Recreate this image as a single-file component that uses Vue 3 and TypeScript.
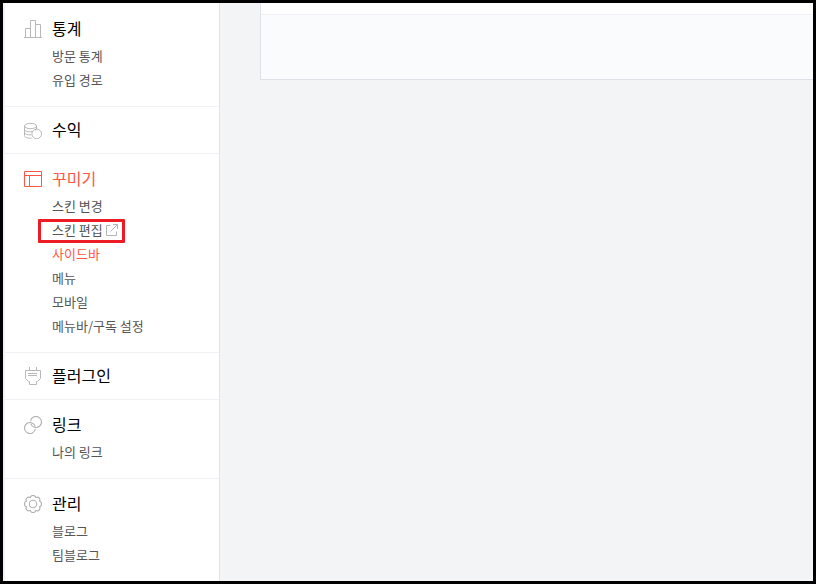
<script setup lang="ts">
type IconName = 'stats' | 'coins' | 'layout' | 'plug' | 'link' | 'gear'

interface MenuItem {
  label: string
  active?: boolean
  external?: boolean
}

interface MenuSection {
  title: string
  icon: IconName
  active?: boolean
  items: MenuItem[]
}

const sections: MenuSection[] = [
  { title: '통계', icon: 'stats', items: [{ label: '방문 통계' }, { label: '유입 경로' }] },
  { title: '수익', icon: 'coins', items: [] },
  {
    title: '꾸미기',
    icon: 'layout',
    active: true,
    items: [
      { label: '스킨 변경' },
      { label: '스킨 편집', external: true },
      { label: '사이드바', active: true },
      { label: '메뉴' },
      { label: '모바일' },
      { label: '메뉴바/구독 설정' },
    ],
  },
  { title: '플러그인', icon: 'plug', items: [] },
  { title: '링크', icon: 'link', items: [{ label: '나의 링크' }] },
  { title: '관리', icon: 'gear', items: [{ label: '블로그' }, { label: '팀블로그' }] },
]
</script>

<template>
  <div class="frame">
    <nav class="sidebar">
      <section
        v-for="section in sections"
        :key="section.title"
        class="section"
        :class="{ single: section.items.length === 0 }"
      >
        <a href="#" class="title" :class="{ active: section.active }">
          <svg class="icon" viewBox="0 0 18 18" aria-hidden="true">
            <template v-if="section.icon === 'stats'">
              <path d="M0 17.5H18M1.5 17V8.5H6.5M6.5 17V.5H11.5V17M11.5 4.5H16.5V17" />
            </template>
            <template v-else-if="section.icon === 'coins'">
              <ellipse cx="6.5" cy="5" rx="6" ry="2.7" />
              <path d="M.5 5V14.6C.5 16.3 3.2 17.4 7.6 17.2M12.5 5V8M.5 8.4C.9 10.2 4.4 11.3 8.2 10.6M.5 11.6C.9 13.2 4 14.2 7.2 13.8M11 9.2C11.8 9 12.4 8.6 12.5 8" />
              <circle cx="12.7" cy="12.9" r="4.8" />
            </template>
            <template v-else-if="section.icon === 'layout'">
              <path d="M.5 1.5H17.5V16.5H.5ZM.5 5.5H17.5M5.5 5.5V16.5" />
            </template>
            <template v-else-if="section.icon === 'plug'">
              <path d="M5.5 0V3.5M12.5 0V3.5M1.5 3.5H16.5V11.5L13.5 14.5H12.5V17.5H5.5V14.5H4.5L1.5 11.5ZM4 6.5H13M4 8.5H13" />
            </template>
            <template v-else-if="section.icon === 'link'">
              <path class="round" d="M11.45 12.77A5.5 5.5 0 1 1 11.23 10.3M6.55 5.23A5.5 5.5 0 1 1 6.77 7.7" />
            </template>
            <template v-else>
              <path class="round" d="M6.28 2.44A2.85 2.85 0 0 1 11.72 2.44A2.85 2.85 0 0 1 15.56 6.28A2.85 2.85 0 0 1 15.56 11.72A2.85 2.85 0 0 1 11.72 15.56A2.85 2.85 0 0 1 6.28 15.56A2.85 2.85 0 0 1 2.44 11.72A2.85 2.85 0 0 1 2.44 6.28A2.85 2.85 0 0 1 6.28 2.44Z" />
              <circle class="round" cx="9" cy="9" r="3.7" />
            </template>
          </svg>
          <span>{{ section.title }}</span>
        </a>
        <ul v-if="section.items.length" class="items">
          <li v-for="item in section.items" :key="item.label">
            <a href="#" class="item" :class="{ active: item.active, marked: item.external }">
              <span>{{ item.label }}</span>
              <svg v-if="item.external" class="external" viewBox="0 0 12 12" aria-hidden="true">
                <path d="M4.5 1.5H.5V11.5H10.5V7.5M7 .5H11.5V5M11.5 .5L4.5 7.5" />
              </svg>
            </a>
          </li>
        </ul>
      </section>
    </nav>
    <main class="content">
      <div class="panel">
        <div class="panel-head"></div>
        <div class="panel-body"></div>
      </div>
    </main>
  </div>
</template>

<style>
body {
  margin: 0;
}
</style>

<style scoped>
.frame {
  box-sizing: border-box;
  display: flex;
  height: 100vh;
  overflow: hidden;
  border: 3px solid #000;
  background: #f3f4f6;
  font-family: "Noto Sans CJK KR", "Noto Sans", sans-serif;
}

.sidebar {
  box-sizing: border-box;
  flex: 0 0 217px;
  padding-top: 1px;
  border-left: 2px solid #f0f1f8;
  border-right: 1px solid #dfe3ea;
  background: #fff;
}

.section {
  padding: 12px 19px 16px;
  border-bottom: 1px solid #f0f1f5;
}

.section.single {
  padding: 10px 19px 12px;
}

.section:last-child {
  border-bottom: 0;
}

.title {
  display: flex;
  align-items: center;
  gap: 10px;
  height: 24px;
  color: #000;
  font-size: 16px;
  line-height: 24px;
  text-decoration: none;
}

.icon {
  flex: none;
  width: 18px;
  height: 18px;
  margin-top: 2px;
  fill: none;
  stroke: #b8b8b8;
  stroke-width: 1;
}

.icon .round {
  stroke: #b0b0b0;
  stroke-width: 1.1;
}

.title.active,
.item.active {
  color: #ff5544;
}

.title.active .icon {
  stroke: #ff5544;
}

.items {
  margin: 2px 0 0;
  padding: 0 0 0 28px;
  list-style: none;
}

.items li {
  height: 24px;
}

.item {
  position: relative;
  display: inline-flex;
  align-items: center;
  gap: 3px;
  height: 24px;
  color: #555;
  font-size: 13px;
  line-height: 24px;
  white-space: nowrap;
  text-decoration: none;
}

.external {
  width: 12px;
  height: 12px;
  fill: none;
  stroke: #b4b4b4;
}

/* Highlight outline laid over the marked entry */
.marked::after {
  content: "";
  position: absolute;
  inset: 1px -7px -1px -14px;
  border: 3px solid #ed1c24;
  border-radius: 1px;
}

.content {
  flex: 1;
  min-width: 0;
  padding-left: 40px;
}

.panel {
  border-left: 1px solid #dfe1e8;
  border-bottom: 1px solid #dfe1e8;
  background: #fafbfd;
}

.panel-head {
  height: 11px;
  border-bottom: 1px solid #f0f0f5;
  background: #fff;
}

.panel-body {
  height: 64px;
}
</style>
